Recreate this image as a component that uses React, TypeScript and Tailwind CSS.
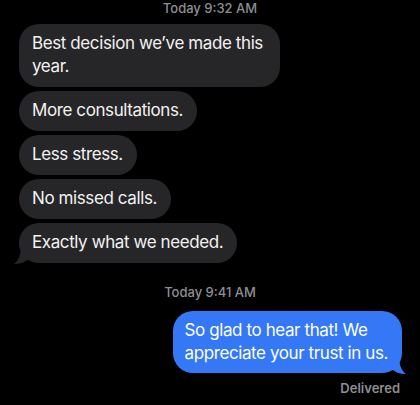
import React from 'react';

const gray = '#262628';
const blue = '#3478F6';

function LeftTail() {
  return (
    <svg
      className="absolute -left-[5px] -bottom-[1px]"
      width="16"
      height="18"
      viewBox="0 0 16 18"
    >
      <path d="M16 0 L7 0 C7 8 5 14 0 18 C6 18 10 16.5 13 14 L16 14 Z" fill={gray} />
    </svg>
  );
}

function RightTail() {
  return (
    <svg
      className="absolute -right-[4px] -bottom-[1px]"
      width="16"
      height="18"
      viewBox="0 0 16 18"
    >
      <path d="M0 0 L9 0 C9 8 11 14 16 18 C10 18 6 16.5 3 14 L0 14 Z" fill={blue} />
    </svg>
  );
}

function Stamp({ children }: { children: React.ReactNode }) {
  return (
    <div className="text-center text-[13px] leading-[16px] font-medium text-[#8e8e93]">
      {children}
    </div>
  );
}

function Received({ children, wide, tail }: { children: React.ReactNode; wide?: boolean; tail?: boolean }) {
  return (
    <div
      className={`relative rounded-[20px] bg-[#262628] pl-[13px] pr-[14px] pt-[8px] pb-[9px] text-[17px] leading-[23px] tracking-[-0.4px] text-[#f2f2f2] ${
        wide ? 'w-[261px]' : 'w-fit'
      }`}
    >
      {tail && <LeftTail />}
      <span className="relative whitespace-nowrap">{children}</span>
    </div>
  );
}

export default function App() {
  const received = [
    'More consultations.',
    'Less stress.',
    'No missed calls.',
    'Exactly what we needed.',
  ];

  return (
    <div
      className="w-full min-h-screen bg-black flex flex-col"
      style={{ fontFamily: 'Inter, "Liberation Sans", sans-serif' }}
    >
      <Stamp>Today 9:32 AM</Stamp>

      <div className="mt-[8px] pl-[19px] flex flex-col gap-1">
        <Received wide>
          Best decision we’ve made this
          <br />
          year.
        </Received>
        {received.map((t, i) => (
          <Received key={t} tail={i === received.length - 1}>
            {t}
          </Received>
        ))}
      </div>

      <div className="mt-[21px]">
        <Stamp>Today 9:41 AM</Stamp>
      </div>

      <div className="mt-[11px] pr-[18px] flex justify-end">
        <div className="relative w-fit rounded-[20px] bg-[#3478F6] pl-[12px] pr-[14px] pt-[8px] pb-[8px] text-[17px] leading-[23px] tracking-[-0.4px] text-white">
          <RightTail />
          <span className="relative whitespace-nowrap">
            So glad to hear that! We
            <br />
            appreciate your trust in us.
          </span>
        </div>
      </div>

      <div className="mt-[7px] pr-[20px] text-right text-[13px] leading-[16px] font-semibold text-[#8e8e93]">
        Delivered
      </div>
    </div>
  );
}
